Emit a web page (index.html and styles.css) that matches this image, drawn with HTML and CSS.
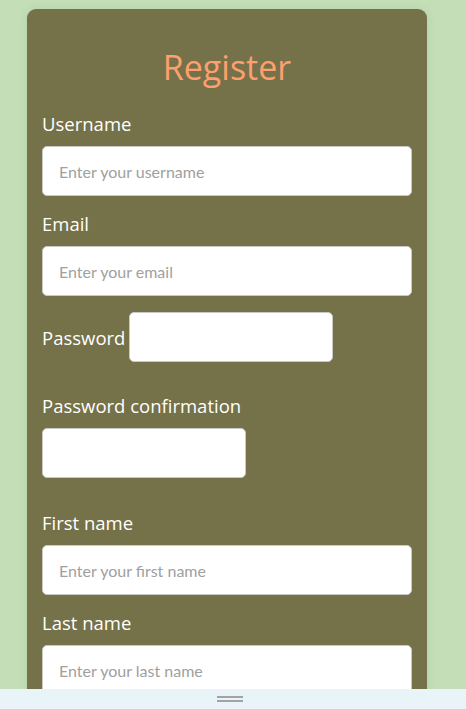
FILE: index.html
```html
<!DOCTYPE html>
<html lang="en">
<head>
<meta charset="utf-8">
<title>Register</title>
<link rel="stylesheet" href="styles.css">
</head>
<body>
<main class="page">
  <section class="card">
    <h2 class="title">Register</h2>
    <form class="form">
      <div class="field">
        <label class="label" for="username">Username</label>
        <input class="input input-full" id="username" type="text" placeholder="Enter your username">
      </div>
      <div class="field">
        <label class="label" for="email">Email</label>
        <input class="input input-full" id="email" type="email" placeholder="Enter your email">
      </div>
      <div class="field field-inline field-extra">
        <label class="label label-inline" for="password">Password</label>
        <input class="input input-short" id="password" type="password">
      </div>
      <div class="field field-extra field-extra-more">
        <label class="label" for="password2">Password confirmation</label>
        <input class="input input-short" id="password2" type="password">
      </div>
      <div class="field">
        <label class="label" for="first">First name</label>
        <input class="input input-full" id="first" type="text" placeholder="Enter your first name">
      </div>
      <div class="field">
        <label class="label" for="last">Last name</label>
        <input class="input input-full" id="last" type="text" placeholder="Enter your last name">
      </div>
    </form>
  </section>
</main>
<div class="handle-bar"><span class="handle"></span></div>
</body>
</html>
```
FILE: styles.css
```css
html, body {
  margin: 0;
  padding: 0;
}
body {
  background: #c4dfb8;
  font-family: "Open Sans", "Noto Sans", sans-serif;
  color: #fff;
}
.page {
  padding: 9px 0 40px 27px;
}
.card {
  width: 400px;
  box-sizing: border-box;
  background: #757148;
  border-radius: 9px;
  padding: 20px 15px 30px;
  box-shadow: 0 0 10px rgba(0, 0, 0, 0.08);
}
.title {
  margin: 18px 0 0;
  font-size: 34px;
  line-height: 40px;
  font-weight: 400;
  text-align: center;
  color: #ff9f70;
}
.form {
  display: flex;
  flex-direction: column;
  margin-top: 24px;
}
.field {
  display: flex;
  flex-direction: column;
  align-items: flex-start;
}
.field + .field {
  margin-top: 15px;
}
.field-inline {
  flex-direction: row;
  align-items: center;
  gap: 4px;
}
.field + .field-inline {
  margin-top: 16px;
}
.field-extra {
  margin-bottom: 16px;
}
.field-extra-more {
  margin-bottom: 17px;
}
.label {
  font-size: 18.5px;
  line-height: 25px;
  font-weight: 500;
  margin-bottom: 10px;
  color: #fff;
}
.label-inline {
  margin-bottom: 0;
}
.input {
  box-sizing: border-box;
  height: 50px;
  border: 1px solid #c9c9c9;
  border-radius: 5px;
  background: #fff;
  padding: 0 16px;
  font-family: Lato, "Open Sans", sans-serif;
  font-size: 16px;
  color: #333;
  outline: none;
}
.input::placeholder {
  color: #a0a0a0;
}
.input-full {
  width: 370px;
}
.input-short {
  width: 204px;
}
.handle-bar {
  position: fixed;
  left: 0;
  right: 0;
  bottom: 0;
  height: 20px;
  background: #e9f4f9;
  display: flex;
  justify-content: center;
  align-items: center;
}
.handle {
  width: 26px;
  height: 2px;
  margin-left: -6px;
  border-top: 2px solid #a3a3a3;
  border-bottom: 2px solid #a3a3a3;
}
```
